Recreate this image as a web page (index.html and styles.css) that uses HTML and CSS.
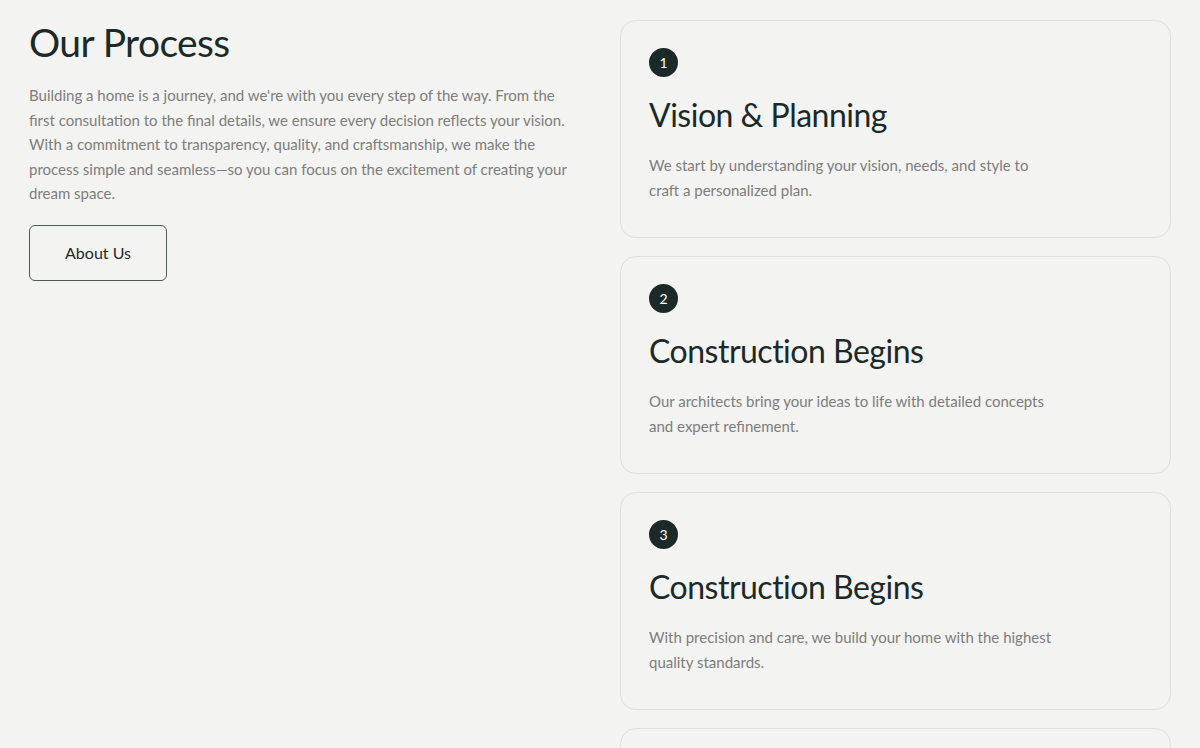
FILE: index.html
```html
<!DOCTYPE html>
<html lang="en">
<head>
  <meta charset="utf-8">
  <title>Our Process</title>
  <link rel="stylesheet" href="styles.css">
</head>
<body>
  <section class="process">
    <div class="intro">
      <h1>Our Process</h1>
      <p>Building a home is a journey, and we're with you every step of the way. From the first consultation to the final details, we ensure every decision reflects your vision. With a commitment to transparency, quality, and craftsmanship, we make the process simple and seamless&mdash;so you can focus on the excitement of creating your dream space.</p>
      <a class="btn" href="#">About Us</a>
    </div>

    <div class="steps">
      <div class="step">
        <span class="num">1</span>
        <h2>Vision &amp; Planning</h2>
        <p>We start by understanding your vision, needs, and style to craft a personalized plan.</p>
      </div>
      <div class="step">
        <span class="num">2</span>
        <h2>Construction Begins</h2>
        <p>Our architects bring your ideas to life with detailed concepts and expert refinement.</p>
      </div>
      <div class="step">
        <span class="num">3</span>
        <h2>Construction Begins</h2>
        <p>With precision and care, we build your home with the highest quality standards.</p>
      </div>
      <div class="step">
        <span class="num">4</span>
        <h2>Final Touches</h2>
        <p>We handle every detail so you can move into your dream space with confidence.</p>
      </div>
    </div>
  </section>
</body>
</html>
```

FILE: styles.css
```css
body {
   margin: 0;
   background: #f3f3f1;
   font-family: Lato, "Open Sans", sans-serif;
   color: #1b2a28;
}

.process {
   display: grid;
   grid-template-columns: 1fr 1fr;
   gap: 40px;
   padding: 20px 29px;
   align-items: start;
}

h1 {
   font-size: 39px;
   font-weight: 400;
   margin: 0;
   line-height: 44px;
   letter-spacing: -0.6px;
}

.intro p {
   font-size: 15px;
   line-height: 24.5px;
   color: #7d7d7c;
   margin: 19px 0 19px;
}

.btn {
   display: inline-flex;
   align-items: center;
   justify-content: center;
   width: 136px;
   height: 54px;
   border: 1px solid #4e5856;
   border-radius: 6px;
   color: #1b2a28;
   text-decoration: none;
   font-size: 16px;
}

.steps {
   display: flex;
   flex-direction: column;
   gap: 18px;
}

.step {
   border: 1px solid #dfdfdd;
   border-radius: 16px;
   padding: 27px 28px 35px;
   height: 154px;
}

.num {
   display: flex;
   align-items: center;
   justify-content: center;
   width: 29px;
   height: 29px;
   border-radius: 50%;
   background: #1b2a28;
   color: #fff;
   font-size: 14px;
}

.step h2 {
   font-size: 32px;
   font-weight: 400;
   margin: 19px 0 19px;
   line-height: 38px;
   letter-spacing: -0.5px;
}

.step p {
   font-size: 15px;
   line-height: 25px;
   color: #7d7d7c;
   margin: 0;
   max-width: 410px;
}
```
